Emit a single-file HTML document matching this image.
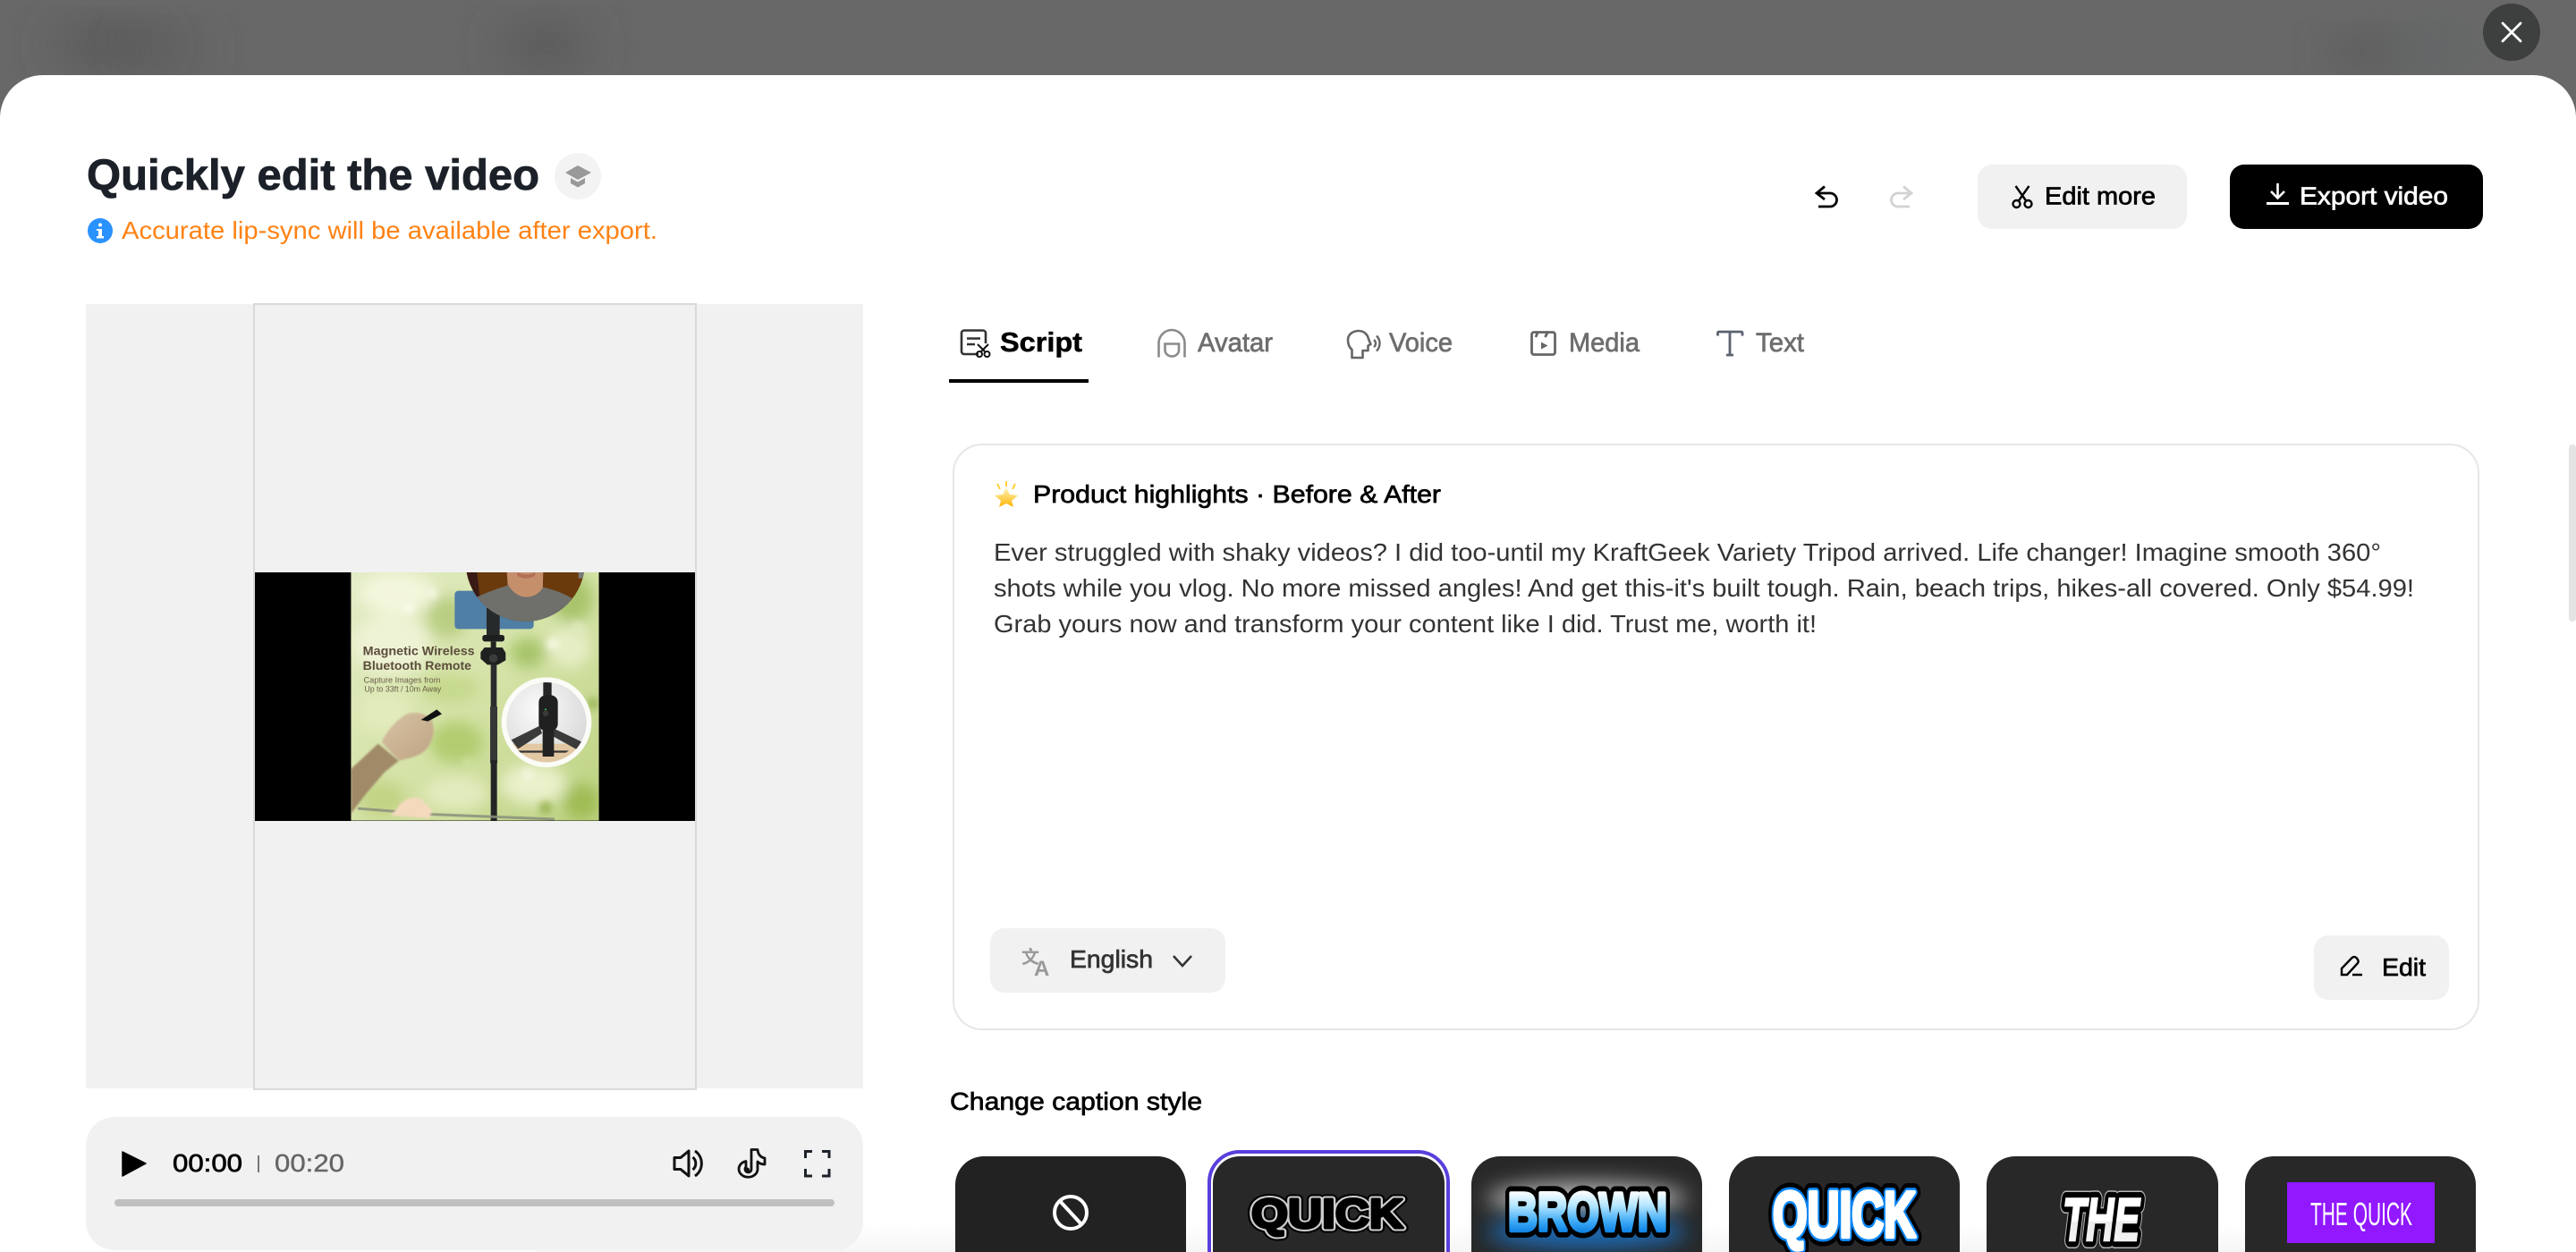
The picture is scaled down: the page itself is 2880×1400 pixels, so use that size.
<!DOCTYPE html>
<html lang="en"><head><meta charset="utf-8"><title>Quickly edit the video</title>
<style>
html,body{margin:0;padding:0;width:2880px;height:1400px;overflow:hidden;background:#fff}
svg{display:block}
text{font-family:"Liberation Sans","Noto Sans CJK SC",sans-serif}
.m{stroke-width:.7px;paint-order:stroke}
</style></head><body>
<svg xmlns="http://www.w3.org/2000/svg" width="2880" height="1400" viewBox="0 0 2880 1400">
<defs>
<filter id="b40" x="-60%" y="-60%" width="220%" height="220%"><feGaussianBlur stdDeviation="26"/></filter>
<filter id="b20" x="-40%" y="-40%" width="180%" height="180%"><feGaussianBlur stdDeviation="22"/></filter>
<filter id="pb" x="-30%" y="-30%" width="160%" height="160%"><feGaussianBlur stdDeviation="24"/></filter>
<filter id="pb2" x="-30%" y="-30%" width="160%" height="160%"><feGaussianBlur stdDeviation="11"/></filter>
<filter id="pb3" x="-10%" y="-10%" width="120%" height="120%"><feGaussianBlur stdDeviation="3"/></filter>
<filter id="gl" x="-40%" y="-60%" width="180%" height="220%"><feGaussianBlur stdDeviation="12"/></filter>
<linearGradient id="foot" x1="0" y1="0" x2="0" y2="1"><stop offset="0" stop-color="#fff"/><stop offset="1" stop-color="#f6f6f6"/></linearGradient>
<linearGradient id="brown" gradientUnits="userSpaceOnUse" x1="0" y1="1332" x2="0" y2="1378"><stop offset="0" stop-color="#ffffff"/><stop offset=".35" stop-color="#b4e6ff"/><stop offset=".75" stop-color="#3aa8f5"/><stop offset="1" stop-color="#0f82e4"/></linearGradient>
<linearGradient id="the" gradientUnits="userSpaceOnUse" x1="0" y1="1337" x2="0" y2="1387"><stop offset="0" stop-color="#fff"/><stop offset=".55" stop-color="#fff"/><stop offset=".6" stop-color="#ececec"/><stop offset="1" stop-color="#f2f2f2"/></linearGradient>
<linearGradient id="star" x1="0" y1="0" x2="0" y2="1"><stop offset="0" stop-color="#fff6c0"/><stop offset="1" stop-color="#ffb300"/></linearGradient>
<linearGradient id="photoBg" x1="0" y1="0" x2="1" y2="1"><stop offset="0" stop-color="#e2ebc4"/><stop offset=".5" stop-color="#d5e3a8"/><stop offset="1" stop-color="#bdd282"/></linearGradient>
<radialGradient id="inset" cx=".4" cy=".35" r=".8"><stop offset="0" stop-color="#fbfbfb"/><stop offset="1" stop-color="#cfcfcf"/></radialGradient>
<linearGradient id="handG" x1="0" y1="0" x2="1" y2="1"><stop offset="0" stop-color="#d8c3a5"/><stop offset="1" stop-color="#bda382"/></linearGradient>
<clipPath id="photoClip"><rect x="367" y="60" width="832" height="833"/></clipPath>
<clipPath id="insetClip"><circle cx="1023" cy="563" r="134"/></clipPath>
<clipPath id="personClip"><circle cx="952" cy="25" r="200"/></clipPath>
</defs>

<!-- dimmed page behind the modal -->
<rect width="2880" height="140" fill="#686868"/>
<ellipse cx="120" cy="50" rx="60" ry="20" fill="#555" filter="url(#b40)"/>
<ellipse cx="185" cy="55" rx="40" ry="18" fill="#5a5a5a" filter="url(#b40)"/>
<ellipse cx="610" cy="52" rx="50" ry="22" fill="#565656" filter="url(#b40)"/>
<ellipse cx="2650" cy="58" rx="50" ry="20" fill="#5c5c5c" filter="url(#b20)"/>
<ellipse cx="2720" cy="55" rx="40" ry="26" fill="#636868" filter="url(#b20)"/>
<circle cx="2808" cy="36" r="32" fill="#3e4040"/>
<path d="M2798 26 L2818 46 M2818 26 L2798 46" stroke="#fff" stroke-width="2.8" stroke-linecap="round" fill="none"/>

<!-- modal -->
<path d="M0 1400 V132 A48 48 0 0 1 48 84 H2832 A48 48 0 0 1 2880 132 V1400 Z" fill="#fff"/>
<rect x="600" y="1368" width="2000" height="32" fill="url(#foot)"/>
<rect x="2872" y="497" width="8" height="198" rx="4" fill="#e4e4e4"/>

<!-- header -->
<text x="97" y="212" font-size="48" font-weight="700" fill="#1c2129" stroke="#1c2129" stroke-width=".8" textLength="506" lengthAdjust="spacingAndGlyphs">Quickly edit the video</text>
<circle cx="646" cy="197" r="26" fill="#f3f3f3"/>
<path d="M646 185 L661 193 L646 201 L632 193 Z" fill="#999"/>
<path d="M638 199 V205 L646 209.5 L654 205 V199 L646 203.5 Z" fill="#999"/>
<circle cx="112" cy="258" r="14" fill="#2a92ff"/>
<rect x="110" y="256" width="4" height="9" fill="#fff"/><rect x="108" y="264" width="8" height="2.5" fill="#fff"/><rect x="108" y="256" width="4" height="2" fill="#fff"/><circle cx="112" cy="251.5" r="2" fill="#fff"/>
<text x="136" y="267" font-size="28" fill="#ff8214" textLength="599" lengthAdjust="spacingAndGlyphs">Accurate lip-sync will be available after export.</text>

<path d="M2040 208.5 L2031 216 L2040 223 M2031 216 H2046 a7.5 7.5 0 0 1 0 15 H2033" stroke="#000" stroke-width="2.8" fill="none"/>
<path d="M2128 208.5 L2137 216 L2128 223 M2137 216 H2122 a7.5 7.5 0 0 0 0 15 H2135" stroke="#d2d2d2" stroke-width="2.8" fill="none"/>

<rect x="2211" y="184" width="234" height="72" rx="16" fill="#f1f1f1"/>
<path d="M2253.5 208 L2265.5 225 M2268.5 208 L2256.5 225" stroke="#000" stroke-width="2.4" fill="none"/>
<circle cx="2254.5" cy="228" r="4" stroke="#000" stroke-width="2.4" fill="none"/><circle cx="2267.5" cy="228" r="4" stroke="#000" stroke-width="2.4" fill="none"/>
<text class="m" x="2286" y="228.5" font-size="28" fill="#000" stroke="#000" textLength="124" lengthAdjust="spacingAndGlyphs">Edit more</text>

<rect x="2493" y="184" width="283" height="72" rx="16" fill="#000"/>
<path d="M2546.5 205 V221 M2539 214 L2546.5 221.5 L2554 214" stroke="#fff" stroke-width="2.6" fill="none"/>
<rect x="2534" y="226" width="25" height="3" fill="#fff"/>
<text class="m" x="2571" y="228.5" font-size="28" fill="#fff" stroke="#fff" textLength="166" lengthAdjust="spacingAndGlyphs">Export video</text>

<!-- preview -->
<rect x="96" y="340" width="869" height="877" fill="#f1f1f1"/>
<rect x="284" y="340" width="494" height="878" fill="#f1f1f1" stroke="#d9d9d9" stroke-width="2"/>
<rect x="285" y="640" width="492" height="278" fill="#000"/>

<g transform="translate(270 620) scale(.33333)" clip-path="url(#photoClip)">
  <rect x="367" y="60" width="832" height="833" fill="url(#photoBg)"/>
  <g filter="url(#pb)">
    <ellipse cx="520" cy="130" rx="130" ry="70" fill="#f3f6dc"/>
    <ellipse cx="500" cy="300" rx="130" ry="100" fill="#eff3d6"/>
    <ellipse cx="690" cy="210" rx="70" ry="70" fill="#b9ce82"/>
    <ellipse cx="1110" cy="150" rx="70" ry="80" fill="#a9c46c"/>
    <ellipse cx="1100" cy="310" rx="70" ry="70" fill="#e6eec6"/>
    <ellipse cx="960" cy="330" rx="60" ry="50" fill="#a6c46a"/>
    <ellipse cx="700" cy="450" rx="100" ry="50" fill="#c6d98e"/>
    <ellipse cx="480" cy="530" rx="90" ry="70" fill="#e2ebbc"/>
    <ellipse cx="720" cy="630" rx="90" ry="70" fill="#b2cc70"/>
    <ellipse cx="980" cy="770" rx="110" ry="70" fill="#e9f0ca"/>
    <ellipse cx="1140" cy="830" rx="60" ry="60" fill="#9fbb52"/>
    <ellipse cx="720" cy="800" rx="110" ry="60" fill="#e2ebbd"/>
    <ellipse cx="470" cy="820" rx="80" ry="60" fill="#c2d384"/>
  </g>
  <g filter="url(#pb2)" opacity=".8">
    <circle cx="1045" cy="300" r="22" fill="#f7f9e6"/><circle cx="1130" cy="250" r="26" fill="#dfe9bd"/>
    <circle cx="960" cy="740" r="20" fill="#f5f8e2"/><circle cx="760" cy="700" r="20" fill="#cfe09c"/>
    <circle cx="560" cy="180" r="20" fill="#fbfced"/><circle cx="1020" cy="850" r="22" fill="#93af4e"/>
    <circle cx="640" cy="130" r="16" fill="#fbfced"/><circle cx="1180" cy="500" r="22" fill="#98b556"/>
  </g>
  <!-- phone -->
  <rect x="715" y="122" width="265" height="128" rx="12" fill="#4f7fa5"/>
  <!-- pole -->
  <rect x="822" y="180" width="44" height="90" fill="#262a2a"/>
  <rect x="808" y="270" width="74" height="22" rx="8" fill="#1d1f1f"/>
  <rect x="836" y="292" width="18" height="30" fill="#222"/>
  <rect x="836" y="365" width="20" height="150" fill="#2a2c2c"/>
  <rect x="834" y="510" width="24" height="190" fill="#353737"/>
  <rect x="836" y="690" width="21" height="203" fill="#232525"/>
  <path d="M815 312 H875 L886 330 V355 L860 370 H825 L802 350 V328 Z" fill="#1f2121"/>
  <circle cx="845" cy="348" r="14" fill="#3b3d3d"/>
  <!-- person -->
  <g clip-path="url(#personClip)">
    <rect x="740" y="-180" width="420" height="420" fill="#6a390c"/>
    <path d="M752 60 H790 L800 150 L770 150 Z" fill="#3a1a14"/>
    <path d="M890 60 H1012 L1010 130 L960 150 L895 130 Z" fill="#c68f6c"/>
    <path d="M775 150 C830 122 880 108 895 103 C925 155 985 155 1012 110 C1060 122 1110 140 1135 170 L1000 240 L880 240 Z" fill="#6f6f6b"/>
    <path d="M925 60 Q955 75 985 60 L985 72 Q955 88 925 72Z" fill="#b36f58"/>
    <rect x="1130" y="60" width="20" height="20" fill="#777"/>
  </g>
  <!-- photo text -->
  <text x="407" y="337" font-size="42" font-weight="700" fill="#5b4c3b" textLength="375" lengthAdjust="spacingAndGlyphs">Magnetic Wireless</text>
  <text x="407" y="387" font-size="42" font-weight="700" fill="#5b4c3b" textLength="364" lengthAdjust="spacingAndGlyphs">Bluetooth Remote</text>
  <text x="410" y="430" font-size="27" fill="#6a5d48" textLength="257" lengthAdjust="spacingAndGlyphs">Capture Images from</text>
  <text x="412" y="460" font-size="27" fill="#6a5d48" textLength="258" lengthAdjust="spacingAndGlyphs">Up to 33ft / 10m Away</text>
  <!-- arm and hand -->
  <path d="M367 720 L458 635 L528 692 L480 730 L420 800 L367 870 Z" fill="#a08a68" filter="url(#pb3)"/>
  <path d="M470 630 C485 595 515 560 550 537 C580 525 620 530 640 558 L645 590 C640 630 625 665 575 680 L528 692 Z" fill="url(#handG)" filter="url(#pb3)"/>
  <path d="M602 555 L655 520 L672 535 L625 560 Z" fill="#111"/>
  <path d="M390 852 L640 872 L1050 888" stroke="#8a8f7c" stroke-width="9" fill="none" opacity=".85"/>
  <path d="M520 855 C535 825 570 808 600 818 L640 858 L630 885 L500 875 Z" fill="#f4d9bd" filter="url(#pb3)"/>
  <!-- inset circle -->
  <circle cx="1023" cy="563" r="151" fill="#fbfbf7"/>
  <g clip-path="url(#insetClip)">
    <rect x="880" y="420" width="290" height="290" fill="url(#inset)"/>
    <rect x="905" y="635" width="240" height="70" fill="#e2c8a2"/>
    <rect x="1012" y="420" width="28" height="60" fill="#262626"/>
    <path d="M905 622 L1000 575 L1008 600 L928 652 Z" fill="#3a3a3a"/>
    <path d="M1040 580 L1140 628 L1124 654 L1034 604 Z" fill="#3a3a3a"/>
    <path d="M922 658 H1098 L1088 665 H930 Z" fill="#333"/>
    <rect x="997" y="472" width="64" height="120" rx="24" fill="#202020"/>
    <rect x="1010" y="590" width="38" height="88" fill="#222"/>
    <circle cx="1020" cy="533" r="10" fill="#3a3a3a"/><circle cx="1020" cy="520" r="3" fill="#3fbf5a"/>
  </g>
</g>

<!-- player -->
<rect x="96" y="1249" width="869" height="149" rx="32" fill="#f1f1f1"/>
<path d="M137 1288 L163 1301 L137 1315 Z" fill="#000" stroke="#000" stroke-width="1.5" stroke-linejoin="round"/>
<text class="m" x="193" y="1310" font-size="28" fill="#000" stroke="#000" textLength="78" lengthAdjust="spacingAndGlyphs">00:00</text>
<rect x="288" y="1292" width="2" height="19" fill="#777"/>
<text x="307" y="1310" font-size="28" fill="#666" stroke="#666" stroke-width=".4" textLength="78" lengthAdjust="spacingAndGlyphs">00:20</text>
<path d="M754 1294.5 H761 L770 1287 V1315 L761 1307.5 H754 Z" stroke="#111" stroke-width="3" fill="none" stroke-linejoin="round"/>
<path d="M774.5 1294 A9 9 0 0 1 774.5 1308 M777 1287 A17 17 0 0 1 777 1315" stroke="#111" stroke-width="3" fill="none"/>
<path d="M840 1285.5 H847 C847.5 1291 850 1294 855 1295 V1302 C851 1302 848.5 1300.5 847 1299 V1308 A10.5 9 0 1 1 834 1298.5 V1305 A3.5 3.5 0 1 0 840 1308 Z" stroke="#111" stroke-width="2.8" fill="none" stroke-linejoin="round"/>
<circle cx="835.5" cy="1308" r="2.5" fill="#111"/>
<path d="M900.5 1295 V1287.5 H908 M919 1287.5 H927 V1295 M927 1307 V1315 H919 M908 1315 H900.5 V1307" stroke="#1c2129" stroke-width="3" fill="none"/>
<rect x="128" y="1341" width="805" height="8" rx="4" fill="#bfbfbf"/>

<!-- tabs -->
<path d="M1094 396 H1078 a3 3 0 0 1-3-3 V372.5 a3 3 0 0 1 3-3 H1099 a3 3 0 0 1 3 3 V384 M1081 378.5 H1096 M1081 385 H1090" stroke="#333" stroke-width="2.6" fill="none"/>
<path d="M1093 385 L1101 393 M1105 385 L1097 393" stroke="#111" stroke-width="2" fill="none"/>
<circle cx="1095" cy="396" r="3" stroke="#111" stroke-width="2" fill="none"/><circle cx="1103.5" cy="396" r="3" stroke="#111" stroke-width="2" fill="none"/>
<text x="1118" y="393" font-size="31" font-weight="700" fill="#000" stroke="#000" stroke-width=".5" textLength="92" lengthAdjust="spacingAndGlyphs">Script</text>
<rect x="1061" y="424" width="156" height="4" fill="#000"/>

<path d="M1295.5 399.5 V384 a14.5 15 0 0 1 29 0 V399.5" stroke="#8a8a8a" stroke-width="2.6" fill="none"/>
<path d="M1302.5 384.5 H1318 V391.5 a7.75 7 0 0 1-15.5 0 Z" stroke="#8a8a8a" stroke-width="2.6" fill="none"/>
<text class="m" x="1339" y="393" font-size="30" fill="#6e6e6e" stroke="#6e6e6e" textLength="84" lengthAdjust="spacingAndGlyphs">Avatar</text>

<path d="M1511.5 400 V391 C1508 388 1507 384 1507 380 C1507 373.5 1513 370 1519 370 C1525 370 1529 374 1530 379 L1532.5 385 L1529.5 386.5 V392 H1523.5 V400 Z" stroke="#666" stroke-width="2.6" fill="none" stroke-linejoin="round"/>
<path d="M1536 380 a5 5 0 0 1 0 8 M1539 375.5 a12 12 0 0 1 0 17" stroke="#666" stroke-width="2.4" fill="none"/>
<text class="m" x="1553" y="393" font-size="30" fill="#6e6e6e" stroke="#6e6e6e" textLength="71" lengthAdjust="spacingAndGlyphs">Voice</text>

<rect x="1712.5" y="371.5" width="26" height="25" rx="2.5" stroke="#666" stroke-width="2.8" fill="none"/>
<path d="M1719 372 L1717 377 M1730 372 L1727.5 377" stroke="#666" stroke-width="2.8" fill="none"/>
<path d="M1723 382.5 L1730.5 386.5 L1723 390.5 Z" fill="#666"/>
<text class="m" x="1754" y="393" font-size="30" fill="#6e6e6e" stroke="#6e6e6e" textLength="79" lengthAdjust="spacingAndGlyphs">Media</text>

<path d="M1920.5 375.5 V372.5 Q1920.5 371 1922 371 H1946.5 Q1948 371 1948 372.5 V375.5 M1934 371 V397 M1930 397 H1938" stroke="#5b6270" stroke-width="2.8" fill="none"/>
<text class="m" x="1963" y="393" font-size="30" fill="#6e6e6e" stroke="#6e6e6e" textLength="54" lengthAdjust="spacingAndGlyphs">Text</text>

<!-- script card -->
<rect x="1066" y="497" width="1705" height="654" rx="32" fill="#fff" stroke="#e6e6e6" stroke-width="2"/>
<path d="M1125 545 L1129 553 L1138 554 L1131 560 L1133 567 L1125 563 L1117 567 L1119 560 L1112 554 L1121 553 Z" fill="url(#star)"/>
<path d="M1125 538 V544 M1115 541 L1118 547 M1135 541 L1132 547" stroke="#ffd23c" stroke-width="2" fill="none"/>
<text class="m" x="1155" y="562" font-size="28" fill="#000" stroke="#000" textLength="456" lengthAdjust="spacingAndGlyphs">Product highlights · Before &amp; After</text>
<text x="1111" y="627" font-size="28" fill="#333" textLength="1551" lengthAdjust="spacingAndGlyphs">Ever struggled with shaky videos? I did too-until my KraftGeek Variety Tripod arrived. Life changer! Imagine smooth 360°</text>
<text x="1111" y="667" font-size="28" fill="#333" textLength="1588" lengthAdjust="spacingAndGlyphs">shots while you vlog. No more missed angles! And get this-it's built tough. Rain, beach trips, hikes-all covered. Only $54.99!</text>
<text x="1111" y="707" font-size="28" fill="#333" textLength="920" lengthAdjust="spacingAndGlyphs">Grab yours now and transform your content like I did. Trust me, worth it!</text>

<rect x="1107" y="1038" width="263" height="72" rx="16" fill="#f1f1f1"/>
<text x="1142" y="1077" font-size="20" fill="#999" font-weight="700">文</text>
<text x="1156" y="1091" font-size="24" fill="#999" font-weight="700">A</text>
<text class="m" x="1196" y="1082" font-size="28" fill="#333" stroke="#333" textLength="93" lengthAdjust="spacingAndGlyphs">English</text>
<path d="M1312 1069 L1322 1080 L1332 1069" stroke="#333" stroke-width="2.6" fill="none"/>

<rect x="2587" y="1046" width="151" height="72" rx="16" fill="#f1f1f1"/>
<path d="M2618 1090 V1083 L2629.5 1071 Q2632 1069 2634.5 1071 L2636 1073 Q2637.5 1075.5 2635.5 1077.5 L2624 1090 Z M2630 1090 H2641" stroke="#000" stroke-width="2.4" fill="none"/>
<text class="m" x="2663" y="1091" font-size="28" fill="#000" stroke="#000" textLength="49" lengthAdjust="spacingAndGlyphs">Edit</text>

<!-- captions -->
<text class="m" x="1062" y="1241" font-size="28" fill="#000" stroke="#000" textLength="282" lengthAdjust="spacingAndGlyphs">Change caption style</text>

<rect x="1068" y="1293" width="258" height="150" rx="32" fill="#222"/>
<circle cx="1197" cy="1356" r="18" stroke="#fff" stroke-width="4" fill="none"/>
<path d="M1185 1343 L1209 1369" stroke="#fff" stroke-width="4"/>

<rect x="1352" y="1288" width="267" height="150" rx="34" fill="#fff" stroke="#5a3fdc" stroke-width="4"/>
<rect x="1356" y="1293" width="259" height="150" rx="30" fill="#282828"/>
<g font-weight="700" font-size="46">
<text x="1399" y="1373" textLength="170" lengthAdjust="spacingAndGlyphs" fill="none" stroke="#000" stroke-width="11" stroke-linejoin="round">QUICK</text>
<text x="1399" y="1373" textLength="170" lengthAdjust="spacingAndGlyphs" fill="none" stroke="#cfcfcf" stroke-width="7" stroke-linejoin="round">QUICK</text>
<text x="1399" y="1373" textLength="170" lengthAdjust="spacingAndGlyphs" fill="#000" stroke="#000" stroke-width="3" stroke-linejoin="round">QUICK</text>
</g>

<rect x="1645" y="1293" width="258" height="150" rx="32" fill="#282828"/>
<ellipse cx="1774" cy="1340" rx="112" ry="18" fill="#b5b5b5" filter="url(#gl)"/>
<ellipse cx="1774" cy="1378" rx="112" ry="18" fill="#1a6cb8" filter="url(#gl)"/>
<g font-weight="700" font-size="60">
<text x="1686" y="1376" textLength="178" lengthAdjust="spacingAndGlyphs" fill="none" stroke="#000" stroke-width="16" stroke-linejoin="round">BROWN</text>
<text x="1686" y="1376" textLength="178" lengthAdjust="spacingAndGlyphs" fill="url(#brown)" stroke="url(#brown)" stroke-width="4.5" stroke-linejoin="round">BROWN</text>
</g>

<rect x="1933" y="1293" width="258" height="150" rx="32" fill="#282828"/>
<g font-weight="700" font-size="72">
<text x="1982" y="1383" textLength="160" lengthAdjust="spacingAndGlyphs" fill="none" stroke="#000" stroke-width="20" stroke-linejoin="round">QUICK</text>
<text x="1982" y="1383" textLength="160" lengthAdjust="spacingAndGlyphs" fill="none" stroke="#0a86f5" stroke-width="10" stroke-linejoin="round">QUICK</text>
<text x="1982" y="1383" textLength="160" lengthAdjust="spacingAndGlyphs" fill="#fff" stroke="#fff" stroke-width="4.5" stroke-linejoin="round">QUICK</text>
</g>

<rect x="2221" y="1293" width="259" height="150" rx="32" fill="#282828"/>
<g font-weight="700" font-style="italic" font-size="68">
<text x="2306" y="1387" textLength="86" lengthAdjust="spacingAndGlyphs" fill="none" stroke="#b5b5b5" stroke-width="18" stroke-linejoin="round">THE</text>
<text x="2306" y="1387" textLength="86" lengthAdjust="spacingAndGlyphs" fill="none" stroke="#000" stroke-width="15" stroke-linejoin="round">THE</text>
<text x="2306" y="1387" textLength="86" lengthAdjust="spacingAndGlyphs" fill="url(#the)" stroke="url(#the)" stroke-width="2.5">THE</text>
</g>

<rect x="2510" y="1293" width="258" height="150" rx="32" fill="#282828"/>
<rect x="2557" y="1322" width="165" height="68" fill="#9118ff"/>
<text x="2583" y="1370" font-size="36" fill="#fff" textLength="114" lengthAdjust="spacingAndGlyphs">THE QUICK</text>
</svg>
</body></html>
